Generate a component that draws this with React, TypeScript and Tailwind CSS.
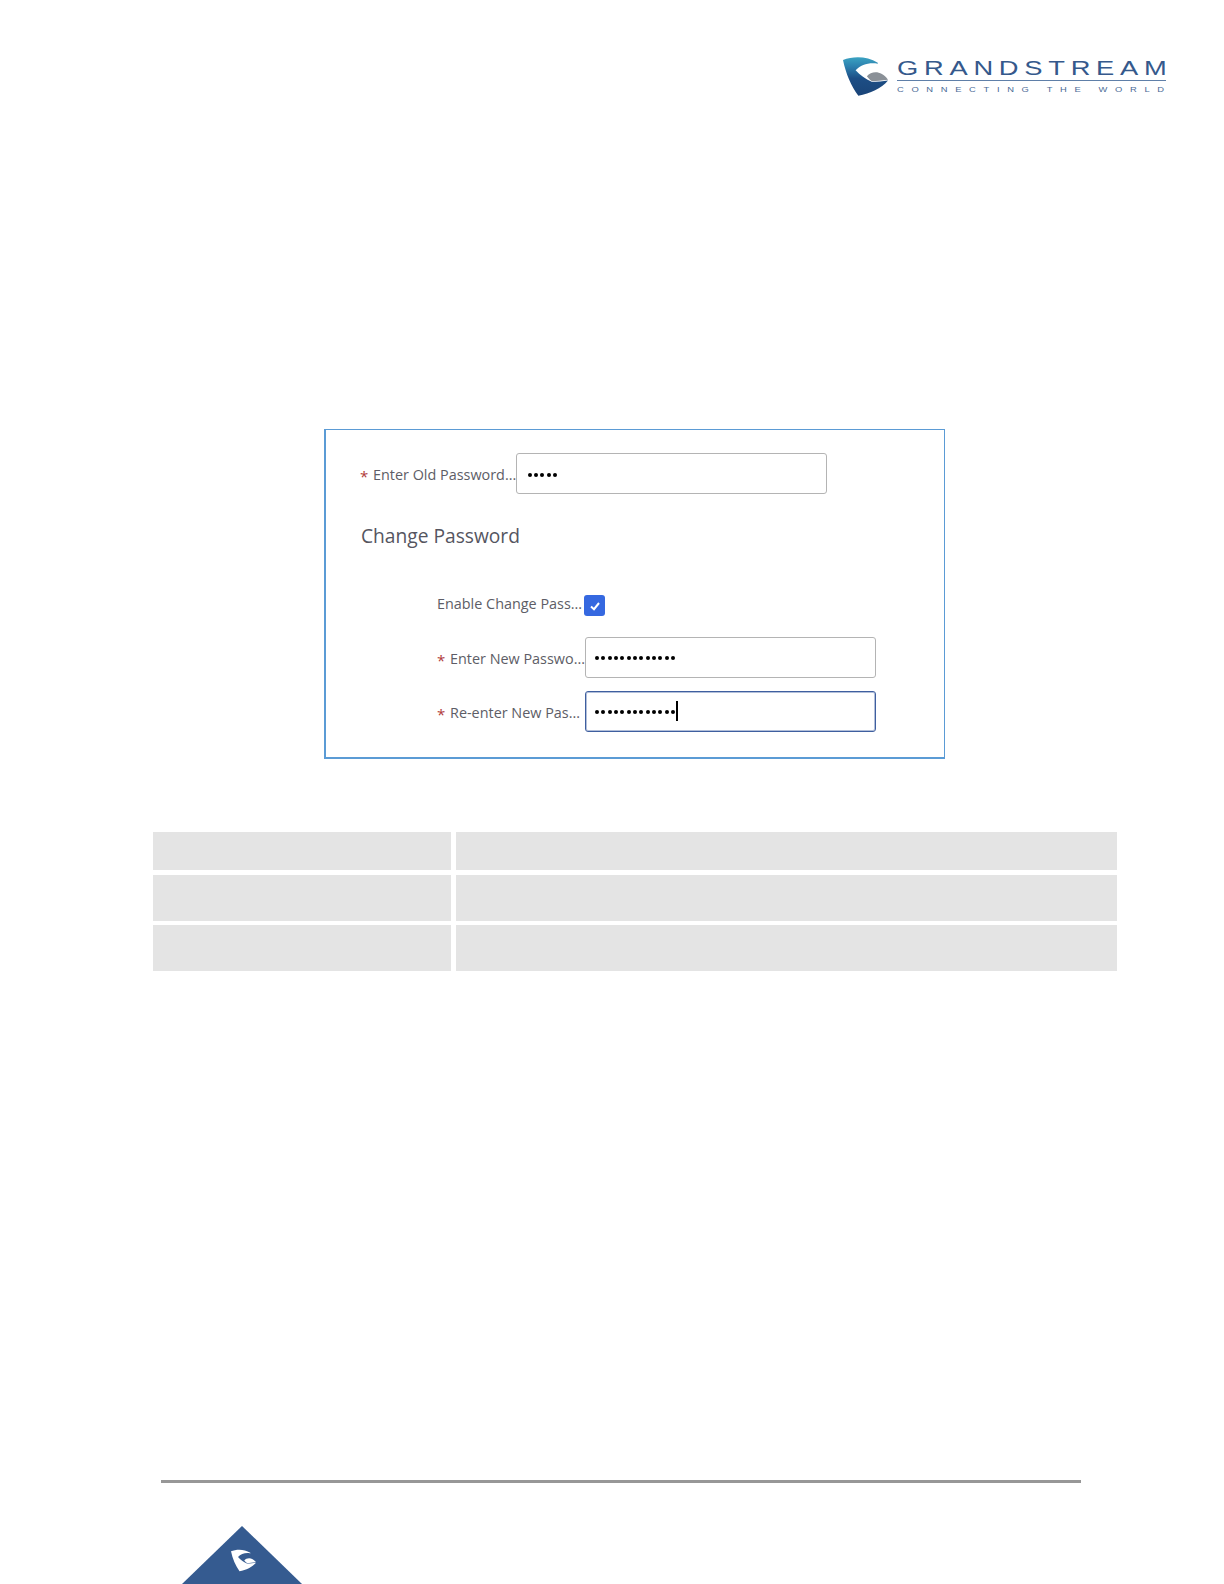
const font = "font-['Open_Sans',sans-serif]";

function Swoosh({ className, fill, wedge }: { className?: string; fill: string; wedge: string }) {
  return (
    <svg viewBox="0 0 132 113" className={className}>
      <defs>
        <linearGradient id="logoBlue" x1="0" y1="0" x2="0" y2="1">
          <stop offset="0" stopColor="#3ba3c2" />
          <stop offset="0.25" stopColor="#2c7fae" />
          <stop offset="0.55" stopColor="#1d4e85" />
          <stop offset="1" stopColor="#1a4478" />
        </linearGradient>
      </defs>
      <path
        d="M0 8 C30 -4 70 -4 102 16 L102 19 C78 14 52 22 37 38 C50 52 66 64 84 72 C100 72 118 70 132 68 C112 92 80 106 45 113 C24 85 8 47 0 8 Z"
        fill={fill}
      />
      <path d="M70 56 C84 40 112 38 132 66 C112 68 100 70 84 70 C78 66 74 60 70 56 Z" fill={wedge} />
    </svg>
  );
}

function Logo() {
  return (
    <div className="flex justify-end pr-[58px] pt-[57px]">
      <div className="flex items-start gap-[9px]">
        <Swoosh className="h-[39px] w-[45px]" fill="url(#logoBlue)" wedge="#8a9097" />
        <div className="w-[269px] pt-[1px]">
          <div className="h-[20px] origin-left scale-x-[1.4] text-[19.5px] leading-[20px] tracking-[4.1px] whitespace-nowrap text-[#35598c] font-['Liberation_Sans',sans-serif]">
            GRANDSTREAM
          </div>
          <div className="mt-[2px] h-px bg-[#5f7fa8]" />
          <div className="mt-[4px] origin-left scale-x-[1.17] text-[8px] leading-[10px] tracking-[6.55px] whitespace-nowrap text-[#4a6a96] font-['Liberation_Sans',sans-serif]">
            CONNECTING THE WORLD
          </div>
        </div>
      </div>
    </div>
  );
}

function Dots({ count, gap }: { count: number; gap: string }) {
  return (
    <span className={`flex translate-y-px items-center ${gap}`}>
      {Array.from({ length: count }).map((_, i) => (
        <span key={i} className="h-[4px] w-[4px] rounded-full bg-black" />
      ))}
    </span>
  );
}

function Field({ dots, focused }: { dots: number; focused?: boolean }) {
  return (
    <div
      className={`flex h-[41px] w-[291px] items-center rounded-[3px] border bg-white pl-[9px] ${
        focused ? "border-[#3f5f9f] shadow-[inset_0_0_0_1px_rgba(63,95,159,0.4)]" : "border-[#b4b4b4]"
      }`}
    >
      <Dots count={dots} gap="gap-[2.35px]" />
      {focused && <span className="ml-px h-[20px] w-[1.5px] bg-black" />}
    </div>
  );
}

function Label({ text, required, className }: { text: string; required?: boolean; className: string }) {
  return (
    <div className={`flex items-center whitespace-nowrap text-[14.4px] text-[#5d5d66] ${className}`}>
      {required && <span className="mr-[5px] mt-[3px] w-[8px] text-[15px] text-[#b03a3a]">*</span>}
      <span>{text}</span>
    </div>
  );
}

function Panel() {
  return (
    <div className={`ml-[324px] mt-[333px] h-[330px] w-[621px] border-t border-r border-b-2 border-l-2 border-[#5b9bd5] bg-white ${font}`}>
      <div className="mt-[23px] ml-[34px] flex items-center">
        <Label text="Enter Old Password..." required className="w-[156px] translate-y-px" />
        <div className="flex h-[41px] w-[311px] items-center rounded-[3px] border border-[#b4b4b4] bg-white pl-[11px]">
          <Dots count={5} gap="gap-[2.2px]" />
        </div>
      </div>
      <div className="mt-[27px] ml-[35px] text-[19.2px] leading-[30px] text-[#55555f]">Change Password</div>
      <div className="mt-[44px] ml-[111px] flex items-center">
        <Label text="Enable Change Pass..." className="w-[147px] -translate-y-[2px]" />
        <span className="flex h-[21px] w-[21px] items-center justify-center rounded-[3px] bg-[#3568e0]">
          <svg viewBox="0 0 12 12" className="h-[12px] w-[12px]">
            <path d="M2 6.5 L5 9.2 L10 3" fill="none" stroke="#fff" strokeWidth="2" />
          </svg>
        </span>
      </div>
      <div className="mt-[20px] ml-[111px] flex items-center">
        <Label text="Enter New Passwo..." required className="w-[148px] translate-y-[2px]" />
        <Field dots={13} />
      </div>
      <div className="mt-[13px] ml-[111px] flex items-center">
        <Label text="Re-enter New Pas..." required className="w-[148px] translate-y-[2px]" />
        <Field dots={13} focused />
      </div>
    </div>
  );
}

function Table() {
  return (
    <div className="ml-[153px] mt-[73px] w-[964px]">
      <div className="flex h-[38px] gap-[5px]">
        <div className="w-[298px] bg-[#e4e4e4]" />
        <div className="flex-1 bg-[#e4e4e4]" />
      </div>
      <div className="mt-[5px] flex h-[46px] gap-[5px]">
        <div className="w-[298px] bg-[#e4e4e4]" />
        <div className="flex-1 bg-[#e4e4e4]" />
      </div>
      <div className="mt-[4px] flex h-[46px] gap-[5px]">
        <div className="w-[298px] bg-[#e4e4e4]" />
        <div className="flex-1 bg-[#e4e4e4]" />
      </div>
    </div>
  );
}

function Footer() {
  return (
    <div className="mt-[509px]">
      <div className="ml-[161px] h-[3px] w-[920px] bg-[#979797]" />
      <div className="relative ml-[182px] mt-[43px] h-[58px] w-[120px]">
        <svg viewBox="0 0 120 58" className="h-[58px] w-[120px]">
          <polygon points="60,0 120,58 0,58" fill="#355b90" />
        </svg>
        <Swoosh className="absolute left-[49px] top-[22px] h-[25px] w-[25px]" fill="#ffffff" wedge="#ffffff" />
      </div>
    </div>
  );
}

export default function App() {
  return (
    <div className="h-[1584px] w-[1224px] overflow-hidden bg-white">
      <Logo />
      <Panel />
      <Table />
      <Footer />
    </div>
  );
}
